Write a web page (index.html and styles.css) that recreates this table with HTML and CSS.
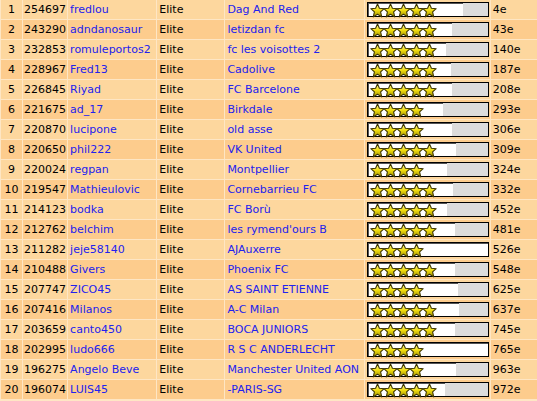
FILE: index.html
```html
<!DOCTYPE html>
<html>
<head>
<meta charset="utf-8">
<link rel="stylesheet" href="styles.css">
</head>
<body>
<svg class="defs" width="0" height="0">
  <defs>
    <linearGradient id="sg" x1="0" y1="0" x2="0" y2="1">
      <stop offset="0" stop-color="#fffca0"/>
      <stop offset="0.5" stop-color="#f0dc10"/>
      <stop offset="1" stop-color="#9c8c00"/>
    </linearGradient>
    <symbol id="star" viewBox="0 0 15 15">
      <polygon points="7.5,0.9 9.4,5.3 14.2,5.7 10.6,8.9 11.7,13.9 7.5,11.3 3.3,13.9 4.4,8.9 0.8,5.7 5.6,5.3" fill="url(#sg)" stroke="#3c3400" stroke-width="1.1" stroke-linejoin="round"/>
    </symbol>
  </defs>
</svg>
<table class="ranking">
  <tbody id="rows"></tbody>
</table>
<script src="app.js"></script>
</body>
</html>
```

FILE: styles.css
```css
html, body {
  margin: 0;
  padding: 0;
  background: #fee6c4;
  overflow: hidden;
}
.defs {
  position: absolute;
  width: 0;
  height: 0;
}
.ranking {
  border-collapse: separate;
  border-spacing: 1px;
  background: #fee6c4;
  margin-top: -1px;
  font-family: "DejaVu Sans", Verdana, sans-serif;
  font-size: 11px;
  color: #000;
  table-layout: fixed;
  width: 560px;
}
.ranking td {
  background: #fdd79e;
  height: 19px;
  padding: 0 2px;
  white-space: nowrap;
  overflow: hidden;
  vertical-align: middle;
  line-height: 13px;
}
.ranking tr.alt td {
  background: #fdcc8d;
}
.c1 { width: 17px; text-align: center; }
.c2 { width: 41px; padding-left: 1px !important; }
.c3 { width: 84px; }
.c4 { width: 63px; }
.c5 { width: 134px; }
.c6 { width: 121px; }
.c7 { width: 64px; }
.ranking a {
  color: #2222ee;
  text-decoration: none;
}
.bar {
  display: flex;
  width: 120px;
  height: 13px;
  border: 1px solid #000;
  background: #dcdcdc;
}
.fill {
  display: flex;
  align-items: center;
  background: #fff;
  height: 13px;
  padding-left: 1px;
  box-sizing: border-box;
  border-top: 1px solid #555;
  border-left: 1px solid #555;
}
.fill svg {
  width: 15px;
  height: 15px;
  margin-right: -2px;
  margin-top: 1px;
  flex: none;
}
```

FILE: app.js
```js
var data = [
  [1,254697,"fredlou","Dag And Red",5,95,"4e"],
  [2,243290,"adndanosaur","letizdan fc",5,84,"43e"],
  [3,232853,"romuleportos2","fc les voisottes 2",5,78,"140e"],
  [4,228967,"Fred13","Cadolive",5,83,"187e"],
  [5,226845,"Riyad","FC Barcelone",5,84,"208e"],
  [6,221675,"ad_17","Birkdale",4,75,"293e"],
  [7,220870,"lucipone","old asse",4,84,"306e"],
  [8,220650,"phil222","VK United",5,88,"309e"],
  [9,220024,"regpan","Montpellier",4,79,"324e"],
  [10,219547,"Mathieulovic","Cornebarrieu FC",5,85,"332e"],
  [11,214123,"bodka","FC Borù",5,79,"452e"],
  [12,212762,"belchim","les rymend'ours B",5,87,"481e"],
  [13,211282,"jeje58140","AJAuxerre",4,120,"526e"],
  [14,210488,"Givers","Phoenix FC",5,87,"548e"],
  [15,207747,"ZICO45","AS SAINT ETIENNE",4,90,"625e"],
  [16,207416,"Milanos","A-C Milan",5,91,"637e"],
  [17,203659,"canto450","BOCA JUNIORS",5,87,"745e"],
  [18,202995,"ludo666","R S C ANDERLECHT",4,120,"765e"],
  [19,196275,"Angelo Beve","Manchester United AON",4,88,"963e"],
  [20,196074,"LUIS45","-PARIS-SG",5,77,"972e"]
];
var tb = document.getElementById("rows");
var html = "";
data.forEach(function (r, i) {
  var stars = "";
  for (var s = 0; s < r[4]; s++) {
    stars += '<svg viewBox="0 0 15 15"><use href="#star"/></svg>';
  }
  html += '<tr' + (r[0] % 2 === 0 ? ' class="alt"' : '') + '>' +
    '<td class="c1">' + r[0] + '</td>' +
    '<td class="c2">' + r[1] + '</td>' +
    '<td class="c3"><a href="#">' + r[2] + '</a></td>' +
    '<td class="c4">Elite</td>' +
    '<td class="c5"><a href="#">' + r[3] + '</a></td>' +
    '<td class="c6"><div class="bar"><div class="fill" style="width:' + r[5] + 'px">' + stars + '</div></div></td>' +
    '<td class="c7">' + r[6] + '</td>' +
    '</tr>';
});
tb.innerHTML = html;
```
